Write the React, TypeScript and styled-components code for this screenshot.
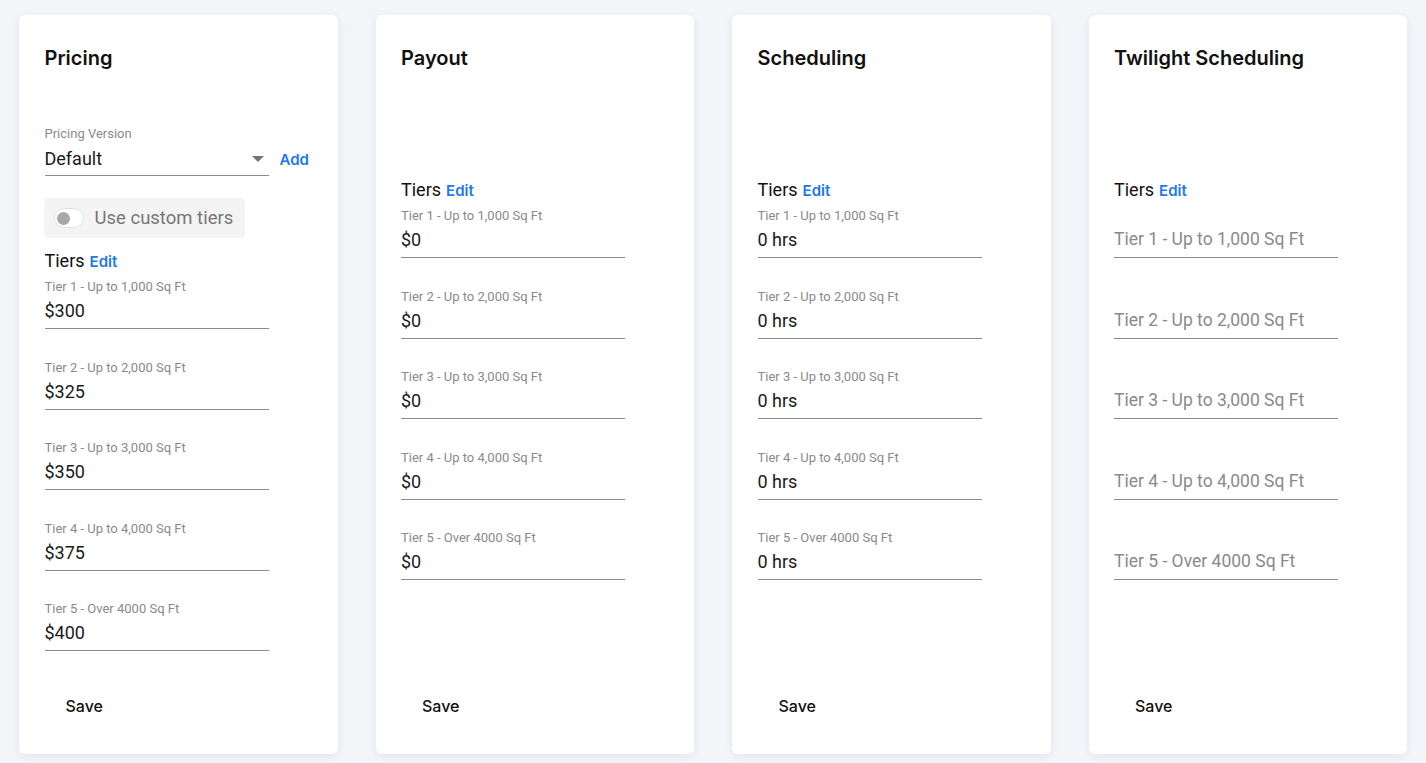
import React from 'react';
import styled, { createGlobalStyle } from 'styled-components';

const GlobalStyle = createGlobalStyle`
    html, body {
        margin: 0;
        padding: 0;
        background-color: #f4f5f9;
    }
    * {
        box-sizing: border-box;
    }
`

const Page = styled.div`
    height: 100vh;
    padding: 15px 19px 9px;
    display: grid;
    grid-template-columns: repeat(4, 1fr);
    column-gap: 38px;
    font-family: Roboto, 'Liberation Sans', sans-serif;
`

const Card = styled.div`
    background-color: #fff;
    border-radius: 6px;
    box-shadow: 0px 2px 10px rgba(30, 40, 90, 0.08);
    padding: 31px 26px 30px 25.5px;
    display: flex;
    flex-direction: column;
`

const Title = styled.h2`
    margin: 0;
    font-family: Inter, 'Noto Sans', sans-serif;
    font-size: 20px;
    font-weight: 600;
    line-height: 24px;
    color: #111;
`

const Spacer = styled.div<{ $h: number }>`
    height: ${(p) => p.$h}px;
    flex-shrink: 0;
`

const Field = styled.div`
    width: 224px;
    margin-bottom: 30.6px;
`

const FieldLabel = styled.div`
    font-size: 13px;
    line-height: 16px;
    height: 16px;
    color: #8a8a8a;
`

const Input = styled.div<{ $placeholder?: boolean }>`
    padding: 4px 0 6px;
    font-size: ${(p) => (p.$placeholder ? '17.5px' : '18px')};
    line-height: 23px;
    color: ${(p) => (p.$placeholder ? '#8a8a8a' : '#1a1a1a')};
    border-bottom: 1px solid #8c8c8c;
    display: flex;
    align-items: center;
`

const SelectRow = styled.div`
    display: flex;
    align-items: flex-end;
`

const SelectField = styled(Field)`
    margin-bottom: 0;
`

const SelectInput = styled(Input)`
    padding: 5px 0;
`

const SelectValue = styled.span`
    flex: 1;
`

const Arrow = styled.span`
    width: 0;
    height: 0;
    border-left: 6px solid transparent;
    border-right: 6px solid transparent;
    border-top: 6px solid #757575;
    margin-right: 5px;
`

const LinkButton = styled.span`
    font-family: Inter, 'Noto Sans', sans-serif;
    font-size: 15px;
    font-weight: 600;
    color: #1a78f0;
    margin-left: 5px;
`

const AddLink = styled(LinkButton)`
    margin-left: 11px;
    margin-bottom: 7px;
`

const ToggleBox = styled.div`
    align-self: flex-start;
    margin-top: 22px;
    margin-left: -1px;
    height: 40px;
    padding: 0 12px 0 10px;
    background-color: #f4f4f4;
    border-radius: 5px;
    display: flex;
    align-items: center;
    gap: 11px;
    font-size: 18.5px;
    color: #777;
`

const Track = styled.span`
    width: 30px;
    height: 20px;
    border-radius: 10px;
    border: 1px solid #e2e2e2;
    background-color: #fff;
    display: flex;
    align-items: center;
    padding-left: 2px;
`

const Knob = styled.span`
    width: 13px;
    height: 13px;
    border-radius: 50%;
    background-color: #a8a8a8;
`

const TiersHeader = styled.div<{ $top: number }>`
    margin-top: ${(p) => p.$top}px;
    margin-bottom: 5px;
    font-size: 18px;
    line-height: 24px;
    color: #111;
`

const SaveButton = styled.button`
    margin-top: auto;
    align-self: flex-start;
    height: 36px;
    padding: 0 21px;
    border: none;
    background: none;
    font-family: Inter, 'Noto Sans', sans-serif;
    font-size: 16px;
    font-weight: 500;
    color: #111;
    cursor: pointer;
`

const tierNames = [
    'Tier 1 - Up to 1,000 Sq Ft',
    'Tier 2 - Up to 2,000 Sq Ft',
    'Tier 3 - Up to 3,000 Sq Ft',
    'Tier 4 - Up to 4,000 Sq Ft',
    'Tier 5 - Over 4000 Sq Ft',
];

type Props = {
    title: string;
    values?: string[];
    pricing?: boolean;
};

const TierCard: React.FC<Props> = ({ title, values, pricing }) => {
    return (
        <Card>
            <Title>{title}</Title>
            {pricing ? (
                <>
                    <Spacer $h={56} />
                    <SelectRow>
                        <SelectField>
                            <FieldLabel>Pricing Version</FieldLabel>
                            <SelectInput>
                                <SelectValue>Default</SelectValue>
                                <Arrow />
                            </SelectInput>
                        </SelectField>
                        <AddLink>Add</AddLink>
                    </SelectRow>
                    <ToggleBox>
                        <Track><Knob /></Track>
                        Use custom tiers
                    </ToggleBox>
                </>
            ) : (
                <Spacer $h={98} />
            )}
            <TiersHeader $top={pricing ? 11 : 10}>
                Tiers<LinkButton>Edit</LinkButton>
            </TiersHeader>
            {tierNames.map((name, i) =>
                values ? (
                    <Field key={name}>
                        <FieldLabel>{name}</FieldLabel>
                        <Input>{values[i]}</Input>
                    </Field>
                ) : (
                    <Field key={name}>
                        <FieldLabel />
                        <Input $placeholder>{name}</Input>
                    </Field>
                )
            )}
            <SaveButton>Save</SaveButton>
        </Card>
    );
};

const App: React.FC = () => {
    return (
        <>
            <GlobalStyle />
            <Page>
                <TierCard title="Pricing" pricing values={['$300', '$325', '$350', '$375', '$400']} />
                <TierCard title="Payout" values={['$0', '$0', '$0', '$0', '$0']} />
                <TierCard title="Scheduling" values={['0 hrs', '0 hrs', '0 hrs', '0 hrs', '0 hrs']} />
                <TierCard title="Twilight Scheduling" />
            </Page>
        </>
    );
};

export default App;
